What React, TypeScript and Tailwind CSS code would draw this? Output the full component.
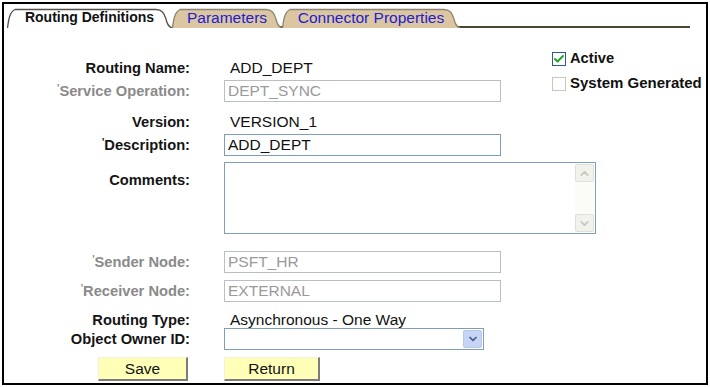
import { ChevronDown, ChevronUp, Check } from "lucide-react";
import type { ReactNode } from "react";

const font = "font-['Liberation_Sans',Arial,sans-serif]";

function TabShape({ w, active }: { w: number; active?: boolean }) {
  const h = 20;
  const d = `M0.5,${h} C1.5,12 2.5,4 8,1.5 L${w - 16},1.5 C${w - 10},1.5 ${w - 8},5 ${w - 6},11 C${w - 5},16 ${w - 3},${h - 1} ${w},${h}`;
  return (
    <svg className="absolute inset-0" width={w} height={h} viewBox={`0 0 ${w} ${h}`}>
      <path d={`${d} Z`} fill={active ? "#ffffff" : "#dcc6a2"} stroke="none" />
      <path d={d} fill="none" stroke={active ? "#555048" : "#8d8574"} strokeWidth={1.3} />
    </svg>
  );
}

function Tab({ w, label, active }: { w: number; label: string; active?: boolean }) {
  return (
    <div
      className={`relative h-[20px] shrink-0 ${active ? "" : "border-b-2 border-[#4a4636]"}`}
      style={{ width: w }}
    >
      <TabShape w={w} active={active} />
      <div
        className={`relative flex h-[18px] items-center justify-center pt-[1px] ${
          active ? "text-[14px] font-bold text-[#111]" : "text-[15.5px] text-[#2020d0]"
        }`}
      >
        {label}
      </div>
    </div>
  );
}

function Req() {
  return <span className="align-[4px] text-[10px]">'</span>;
}

function Row({
  label,
  gray,
  req,
  h,
  mt = 0,
  children,
}: {
  label: string;
  gray?: boolean;
  req?: boolean;
  h: number;
  mt?: number;
  children?: ReactNode;
}) {
  return (
    <div className="flex items-center" style={{ height: h, marginTop: mt }}>
      <div
        className={`w-[186px] shrink-0 text-right text-[14.7px] font-bold ${
          gray ? "text-[#8a8a8a]" : "text-[#141414]"
        }`}
      >
        {req ? <Req /> : null}
        {label}
      </div>
      <div className="ml-[34px] flex items-center">{children}</div>
    </div>
  );
}

function Field({ value, gray, w = 277 }: { value: string; gray?: boolean; w?: number }) {
  return (
    <div
      className={`flex h-[22px] items-center border px-[3px] text-[15.5px] ${
        gray ? "border-[#b9bfc4] text-[#9a9a9a]" : "border-[#7f9db9] text-[#111]"
      }`}
      style={{ width: w }}
    >
      {value}
    </div>
  );
}

function Button({ label, w }: { label: string; w: number }) {
  return (
    <div
      className="flex h-[24px] items-center justify-center border-t border-l border-t-[#f2f2d8] border-l-[#f2f2d8] border-r-2 border-b-2 border-r-[#7c7c7c] border-b-[#7c7c7c] bg-[#ffffb8] text-[15.5px] text-[#111]"
      style={{ width: w }}
    >
      {label}
    </div>
  );
}

export default function App() {
  return (
    <div className={`h-[387px] w-[710px] bg-white pl-[2px] pt-[2px] ${font}`}>
      <div className="h-[383px] w-[706px] border-2 border-black">
        {/* Tabs */}
        <div className="ml-[3px] mr-[16px] mt-[4px] flex items-end">
          <Tab w={165} label="Routing Definitions" active />
          <Tab w={110} label="Parameters" />
          <Tab w={178} label="Connector Properties" />
          <div className="h-[20px] flex-1 border-b-2 border-[#4a4636]" />
        </div>

        {/* Top rows + checkboxes */}
        <div className="flex">
          <div className="w-[500px]">
            <Row label="Routing Name:" h={22} mt={29}>
              <span className="ml-[6px] text-[15.5px] text-[#111]">ADD_DEPT</span>
            </Row>
            <Row label="Service Operation:" gray req h={22} mt={1}>
              <Field value="DEPT_SYNC" gray />
            </Row>
          </div>
          <div className="ml-[48px] mt-[22px] flex flex-col gap-[8px]">
            <div className="flex h-[17px] items-center gap-[4px]">
              <div className="flex h-[14px] w-[14px] items-center justify-center border border-[#2a5a9a] bg-white">
                <Check size={12} strokeWidth={4} color="#22a322" />
              </div>
              <span className="text-[14.7px] font-bold text-[#111]">Active</span>
            </div>
            <div className="flex h-[17px] items-center gap-[4px]">
              <div className="h-[14px] w-[14px] border border-[#c9c7ba] bg-white" />
              <span className="text-[15px] font-bold text-[#111]">System Generated</span>
            </div>
          </div>
        </div>

        <Row label="Version:" h={22} mt={9}>
          <span className="ml-[6px] text-[15.5px] text-[#111]">VERSION_1</span>
        </Row>
        <Row label="Description:" req h={22} mt={1}>
          <Field value="ADD_DEPT" />
        </Row>
        <div className="flex items-start" style={{ marginTop: 6 }}>
          <div className="w-[186px] shrink-0 pt-[7px] text-right text-[14.7px] font-bold text-[#141414]">
            Comments:
          </div>
          <div className="ml-[34px] flex h-[72px] w-[372px] justify-end border border-[#7f9db9] bg-white p-[1px]">
            <div className="flex w-[19px] flex-col justify-between bg-[#fbfbf8]">
              <div className="flex h-[18px] items-center justify-center rounded-[2px] border border-[#e0e0d8] bg-[#f2f2ec]">
                <ChevronUp size={13} strokeWidth={3} color="#c6c6bc" />
              </div>
              <div className="flex h-[18px] items-center justify-center rounded-[2px] border border-[#e0e0d8] bg-[#f2f2ec]">
                <ChevronDown size={13} strokeWidth={3} color="#c6c6bc" />
              </div>
            </div>
          </div>
        </div>

        <Row label="Sender Node:" gray req h={22} mt={17}>
          <Field value="PSFT_HR" gray />
        </Row>
        <Row label="Receiver Node:" gray req h={22} mt={7}>
          <Field value="EXTERNAL" gray />
        </Row>
        <Row label="Routing Type:" h={16} mt={10}>
          <span className="ml-[6px] text-[15.5px] text-[#111]">Asynchronous - One Way</span>
        </Row>
        <Row label="Object Owner ID:" h={22} mt={0}>
          <div className="flex h-[22px] w-[260px] items-center justify-end border border-[#7f9db9] bg-white pr-[1px]">
            <div className="flex h-[18px] w-[19px] items-center justify-center rounded-[2px] border border-[#b8c8ec] bg-[#c6d5f6]">
              <ChevronDown size={12} strokeWidth={3.5} color="#4a5d86" />
            </div>
          </div>
        </Row>
        <div className="mt-[7px] flex">
          <div className="ml-[94px]">
            <Button label="Save" w={90} />
          </div>
          <div className="ml-[36px]">
            <Button label="Return" w={96} />
          </div>
        </div>
      </div>
    </div>
  );
}
